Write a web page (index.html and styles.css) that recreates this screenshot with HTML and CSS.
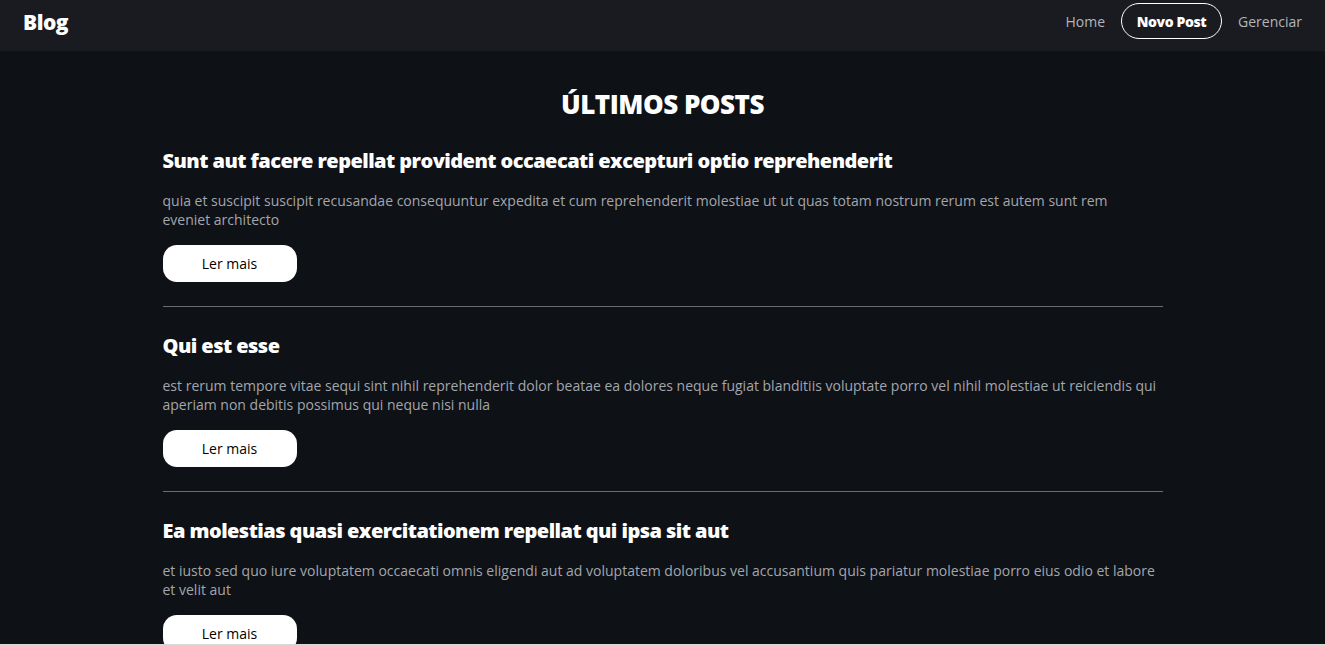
FILE: index.html
```html
<!DOCTYPE html>
<html lang="pt-BR">
<head>
<meta charset="utf-8">
<title>Blog</title>
<link rel="stylesheet" href="styles.css">
</head>
<body>
<div class="page">
  <header class="navbar">
    <a class="brand" href="#">Blog</a>
    <nav class="nav-links">
      <a href="#" class="nav-link">Home</a>
      <a href="#" class="nav-link nav-btn">Novo Post</a>
      <a href="#" class="nav-link">Gerenciar</a>
    </nav>
  </header>
  <main class="content">
    <h1 class="page-title">ÚLTIMOS POSTS</h1>
    <article class="post">
      <h2 class="post-title">Sunt aut facere repellat provident occaecati excepturi optio reprehenderit</h2>
      <p class="post-body">quia et suscipit suscipit recusandae consequuntur expedita et cum reprehenderit molestiae ut ut quas totam nostrum rerum est autem sunt rem eveniet architecto</p>
      <a href="#" class="read-more">Ler mais</a>
    </article>
    <article class="post">
      <h2 class="post-title">Qui est esse</h2>
      <p class="post-body">est rerum tempore vitae sequi sint nihil reprehenderit dolor beatae ea dolores neque fugiat blanditiis voluptate porro vel nihil molestiae ut reiciendis qui aperiam non debitis possimus qui neque nisi nulla</p>
      <a href="#" class="read-more">Ler mais</a>
    </article>
    <article class="post">
      <h2 class="post-title">Ea molestias quasi exercitationem repellat qui ipsa sit aut</h2>
      <p class="post-body">et iusto sed quo iure voluptatem occaecati omnis eligendi aut ad voluptatem doloribus vel accusantium quis pariatur molestiae porro eius odio et labore et velit aut</p>
      <a href="#" class="read-more">Ler mais</a>
    </article>
    <article class="post">
      <h2 class="post-title">Eum et est occaecati</h2>
      <p class="post-body">ullam et saepe reiciendis voluptatem adipisci sit amet autem assumenda provident rerum culpa quis hic commodi nesciunt rem tenetur doloremque ipsam iure quis sunt voluptatem rerum illo velit</p>
      <a href="#" class="read-more">Ler mais</a>
    </article>
  </main>
</div>
</body>
</html>
```
FILE: styles.css
```css
* { box-sizing: border-box; }
html { background: #d9d9d9; }
body {
  margin: 0;
  font-family: "Open Sans", "Liberation Sans", sans-serif;
  color: #fff;
}
a { text-decoration: none; }
.page {
  height: 644px;
  overflow: hidden;
  background: #0e1116;
}
.navbar {
  height: 51px;
  background: #1a1b20;
  display: flex;
  align-items: center;
  justify-content: space-between;
  padding: 0 23px;
}
.brand {
  color: #fff;
  font-weight: 800;
  font-size: 21px;
  letter-spacing: -0.5px;
  margin-top: -8px;
}
.nav-links {
  display: flex;
  align-items: center;
  gap: 16px;
  margin-top: -9px;
}
.nav-link {
  color: #b3b5ba;
  font-size: 14px;
}
.nav-btn {
  color: #fff;
  font-weight: 800;
  letter-spacing: -0.4px;
  border: 1px solid #fff;
  border-radius: 18px;
  height: 36px;
  width: 101px;
  display: flex;
  align-items: center;
  justify-content: center;
}
.content {
  width: 1000px;
  margin: 0 auto;
  padding-top: 36px;
}
.page-title {
  margin: 0 0 26px;
  text-align: center;
  font-size: 26px;
  font-weight: 800;
  letter-spacing: -0.5px;
  line-height: 34px;
}
.post {
  border-bottom: 1px solid #6b6d72;
  padding-bottom: 24px;
  margin-bottom: 25px;
}
.post-title {
  margin: 0 0 16px;
  font-size: 20px;
  font-weight: 800;
  letter-spacing: -0.55px;
  line-height: 28px;
}
.post-body {
  max-width: 994px;
  margin: 0 0 16px;
  color: #a3a6ad;
  font-size: 14px;
  line-height: 19px;
}
.read-more {
  display: flex;
  align-items: center;
  justify-content: center;
  width: 134px;
  height: 37px;
  border-radius: 14px;
  background: #fff;
  color: #000;
  font-size: 14px;
}
```
